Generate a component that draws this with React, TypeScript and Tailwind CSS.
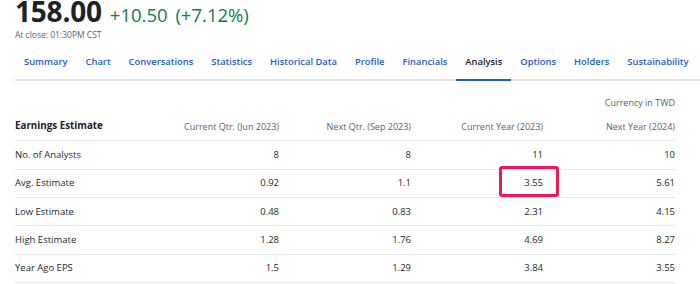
const TABS = [
  "Summary",
  "Chart",
  "Conversations",
  "Statistics",
  "Historical Data",
  "Profile",
  "Financials",
  "Analysis",
  "Options",
  "Holders",
  "Sustainability",
];

const COLUMNS = [
  "Current Qtr. (Jun 2023)",
  "Next Qtr. (Sep 2023)",
  "Current Year (2023)",
  "Next Year (2024)",
];

const ROWS: { label: string; values: string[] }[] = [
  { label: "No. of Analysts", values: ["8", "8", "11", "10"] },
  { label: "Avg. Estimate", values: ["0.92", "1.1", "3.55", "5.61"] },
  { label: "Low Estimate", values: ["0.48", "0.83", "2.31", "4.15"] },
  { label: "High Estimate", values: ["1.28", "1.76", "4.69", "8.27"] },
  { label: "Year Ago EPS", values: ["1.5", "1.29", "3.84", "3.55"] },
];

export default function App() {
  return (
    <main
      className="w-[700px] h-[284px] overflow-hidden bg-white text-[#232a31]"
      style={{ fontFamily: '"Open Sans", "Noto Sans", sans-serif' }}
    >
      {/* quote header */}
      <div className="pl-[15px]">
        <div className="flex items-baseline gap-[8px]">
          <span className="text-[28px] leading-[22px] font-bold tracking-[-0.2px] text-[#1d2228]">
            158.00
          </span>
          <span className="text-[18.5px] leading-[22px] text-[#0e7a58]">
            +10.50 <span className="ml-[3px]">(+7.12%)</span>
          </span>
        </div>
        <div className="mt-[3px] text-[8.5px] leading-[12px] text-[#5b636a]">At close: 01:30PM CST</div>
      </div>

      {/* tabs */}
      <nav className="ml-[15px] mt-[14px] flex border-b-2 border-[#e0e4e9]">
        {TABS.map((t) => (
          <div
            key={t}
            className={
              t === "Analysis"
                ? "shrink-0 whitespace-nowrap -mb-[2px] px-[9px] pb-[10px] text-[9.4px] leading-[14px] font-semibold text-[#1d2228] border-b-2 border-[#1a5fc9]"
                : "shrink-0 whitespace-nowrap -mb-[2px] px-[9px] pb-[10px] text-[9.4px] leading-[14px] font-semibold text-[#1a60d3] border-b-2 border-transparent"
            }
          >
            {t}
          </div>
        ))}
      </nav>

      {/* earnings table */}
      <section className="ml-[15px] w-[660px]">
        <div className="pt-[15.7px] pb-[3.6px] text-right text-[9px] leading-[12px] text-[#5b636a]">
          Currency in TWD
        </div>
        <div className="grid grid-cols-[132px_132px_132px_132px_132px] h-[29px] items-center border-b border-[#e6e9ec]">
          <div className="text-[9.8px] font-bold text-[#1d2228]">Earnings Estimate</div>
          {COLUMNS.map((c) => (
            <div key={c} className="text-right text-[9px] text-[#5b636a]">
              {c}
            </div>
          ))}
        </div>
        {ROWS.map((r) => (
          <div
            key={r.label}
            className="grid grid-cols-[132px_132px_132px_132px_132px] h-[28.35px] items-center border-b border-[#e6e9ec] text-[9.5px]"
          >
            <div>{r.label}</div>
            {r.values.map((v, i) => (
              <div key={i} className="relative text-right">
                {v}
                {r.label === "Avg. Estimate" && i === 2 && (
                  <span className="absolute right-[-16px] top-[-10px] w-[60px] h-[31px] border-[3px] border-[#f0175c] rounded-[3px]" />
                )}
              </div>
            ))}
          </div>
        ))}
      </section>
    </main>
  );
}
